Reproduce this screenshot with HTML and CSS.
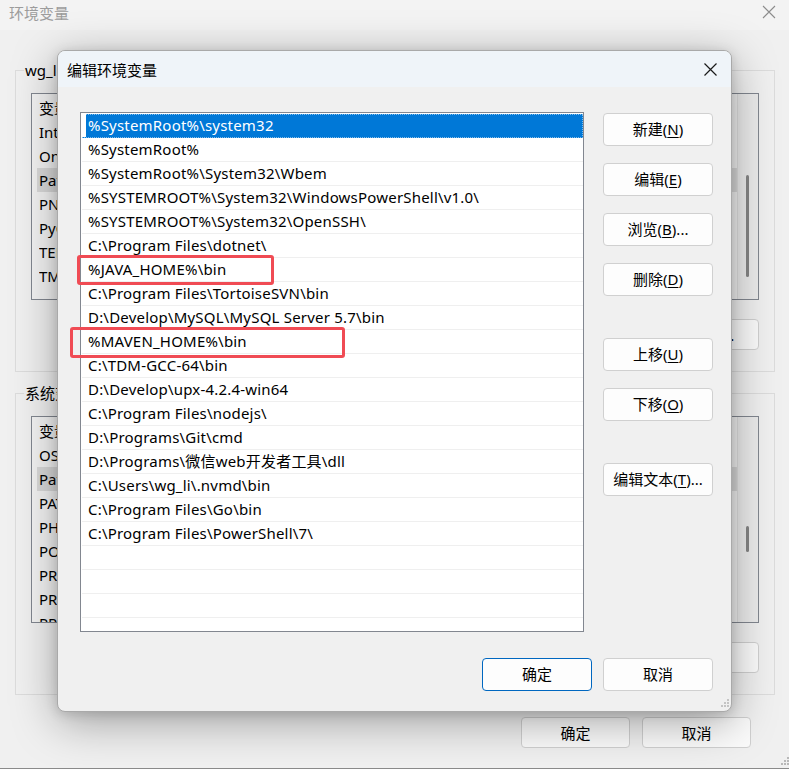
FILE: index.html
```html
<!DOCTYPE html>
<html lang="zh-CN">
<head>
<meta charset="utf-8">
<title>编辑环境变量</title>
<link rel="stylesheet" href="styles.css">
</head>
<body>
<div class="win">
  <div class="win-title">
    <span class="win-title-text">环境变量</span>
    <svg class="win-close" width="14" height="14" viewBox="0 0 14 14"><path d="M1 1L13 13M13 1L1 13" stroke="#8c8c8c" stroke-width="1.1" fill="none"/></svg>
  </div>
  <div class="win-body">
    <div class="group">
      <span class="group-label">wg_li 的用户变量(U)</span>
      <div class="bg-list">
        <div class="bg-head"><span class="cell">变量</span></div>
        <div class="bg-row"><span class="cell">IntelliJ IDEA</span></div>
        <div class="bg-row"><span class="cell">OneDrive</span></div>
        <div class="bg-row bg-sel"><span class="cell">Path</span></div>
        <div class="bg-row"><span class="cell">PNPM_HOME</span></div>
        <div class="bg-row"><span class="cell">PyCharm</span></div>
        <div class="bg-row"><span class="cell">TEMP</span></div>
        <div class="bg-row"><span class="cell">TMP</span></div>
        <div class="bg-scroll"><span class="bg-thumb thumb1"></span></div>
      </div>
      <div class="bg-btns"><button class="bg-btn">编辑(E)...</button></div>
    </div>
    <div class="group g2">
      <span class="group-label">系统变量(S)</span>
      <div class="bg-list">
        <div class="bg-head"><span class="cell">变量</span></div>
        <div class="bg-row"><span class="cell">OS</span></div>
        <div class="bg-row bg-sel"><span class="cell">Path</span></div>
        <div class="bg-row"><span class="cell">PATHEXT</span></div>
        <div class="bg-row"><span class="cell">PHP_HOME</span></div>
        <div class="bg-row"><span class="cell">POWERSHELL</span></div>
        <div class="bg-row"><span class="cell">PROCESSOR</span></div>
        <div class="bg-row"><span class="cell">PROCESSOR</span></div>
        <div class="bg-row"><span class="cell">PROCESSOR</span></div>
        <div class="bg-scroll"><span class="bg-thumb thumb2"></span></div>
      </div>
      <div class="bg-btns"><button class="bg-btn">删除(L)</button></div>
    </div>
  </div>
  <div class="win-footer">
    <button class="bg-btn">确定</button>
    <button class="bg-btn">取消</button>
  </div>
  <svg class="grip win-grip" width="10" height="10" viewBox="0 0 10 10"><g fill="#b8b8b8"><rect x="8" y="0" width="2" height="2"/><rect x="5" y="3" width="2" height="2"/><rect x="8" y="3" width="2" height="2"/><rect x="2" y="6" width="2" height="2"/><rect x="5" y="6" width="2" height="2"/><rect x="8" y="6" width="2" height="2"/></g></svg>
</div>

<div class="dlg">
  <div class="dlg-title">
    <span>编辑环境变量</span>
    <svg class="dlg-close" width="13" height="13" viewBox="0 0 13 13"><path d="M0.5 0.5L12.5 12.5M12.5 0.5L0.5 12.5" stroke="#1a1a1a" stroke-width="1.2" fill="none"/></svg>
  </div>
  <div class="dlg-body">
    <div class="list">
      <div class="row sel">%SystemRoot%\system32</div>
      <div class="row">%SystemRoot%</div>
      <div class="row">%SystemRoot%\System32\Wbem</div>
      <div class="row">%SYSTEMROOT%\System32\WindowsPowerShell\v1.0\</div>
      <div class="row">%SYSTEMROOT%\System32\OpenSSH\</div>
      <div class="row">C:\Program Files\dotnet\</div>
      <div class="row">%JAVA_HOME%\bin</div>
      <div class="row">C:\Program Files\TortoiseSVN\bin</div>
      <div class="row">D:\Develop\MySQL\MySQL Server 5.7\bin</div>
      <div class="row">%MAVEN_HOME%\bin</div>
      <div class="row">C:\TDM-GCC-64\bin</div>
      <div class="row">D:\Develop\upx-4.2.4-win64</div>
      <div class="row">C:\Program Files\nodejs\</div>
      <div class="row">D:\Programs\Git\cmd</div>
      <div class="row">D:\Programs\微信web开发者工具\dll</div>
      <div class="row">C:\Users\wg_li\.nvmd\bin</div>
      <div class="row">C:\Program Files\Go\bin</div>
      <div class="row">C:\Program Files\PowerShell\7\</div>
      <div class="row"></div>
      <div class="row"></div>
      <div class="row"></div>
      <div class="row"></div>
    </div>
    <div class="side">
      <button class="btn">新建(<u>N</u>)</button>
      <button class="btn">编辑(<u>E</u>)</button>
      <button class="btn">浏览(<u>B</u>)...</button>
      <button class="btn">删除(<u>D</u>)</button>
      <button class="btn gap">上移(<u>U</u>)</button>
      <button class="btn">下移(<u>O</u>)</button>
      <button class="btn gap">编辑文本(<u>T</u>)...</button>
    </div>
    <div class="foot">
      <button class="btn default">确定</button>
      <button class="btn">取消</button>
    </div>
  </div>
  <div class="mark mark-java"></div>
  <div class="mark mark-maven"></div>
  <svg class="grip dlg-grip" width="10" height="10" viewBox="0 0 10 10"><g fill="#c4c4c4"><rect x="8" y="0" width="2" height="2"/><rect x="5" y="3" width="2" height="2"/><rect x="8" y="3" width="2" height="2"/><rect x="2" y="6" width="2" height="2"/><rect x="5" y="6" width="2" height="2"/><rect x="8" y="6" width="2" height="2"/></g></svg>
</div>
</body>
</html>
```

FILE: styles.css
```css
* { box-sizing: border-box; }
html, body { margin: 0; padding: 0; }
body {
  width: 789px;
  height: 769px;
  overflow: hidden;
  background: #f0f0f0;
  font-family: "Noto Sans", "Noto Sans CJK SC", sans-serif;
  font-size: 15px;
  color: #000;
  position: relative;
}
button { font-family: inherit; font-size: 15px; color: #000; }

/* background window */
.win {
  width: 789px;
  height: 769px;
  background: #f0f0f0;
  border-bottom: 1px solid #8a8a8a;
  position: relative;
}
.win-title {
  height: 30px;
  background: #f3f3f3;
  display: flex;
  align-items: center;
  justify-content: space-between;
  padding: 0 13px 6px 9px;
}
.win-title-text { color: #9c9c9c; font-size: 15px; }
.win-body { padding: 40px 14px 0 15px; }
.group {
  position: relative;
  width: 760px;
  height: 302px;
  border: 1px solid #dcdcdc;
  padding: 22px 15px 0 15px;
}
.g2 { margin-top: 21px; }
.group-label {
  position: absolute;
  top: -11px;
  left: 8px;
  width: 34px;
  padding: 0 0 0 1px;
  background: #f0f0f0;
  line-height: 20px;
  white-space: nowrap;
  overflow: hidden;
}
.bg-list {
  position: relative;
  height: 207px;
  border: 1px solid #828790;
  background: #f4f4f4;
  padding-top: 2px;
  overflow: hidden;
}
.bg-head, .bg-row {
  height: 24px;
  line-height: 24px;
  padding-left: 7px;
  white-space: nowrap;
}
.cell {
  display: inline-block;
  width: 20px;
  overflow: hidden;
  vertical-align: top;
}
.bg-sel { background: #dadada; margin-left: 5px; padding-left: 2px; }
.bg-scroll {
  position: absolute;
  right: 0;
  top: 0;
  bottom: 0;
  width: 21px;
  background: #ececec;
  border-left: 1px solid #e2e2e2;
}
.bg-thumb {
  position: absolute;
  left: 8px;
  width: 3px;
  background: #858585;
  border-radius: 2px;
}
.thumb1 { top: 81px; height: 102px; }
.thumb2 { top: 109px; height: 26px; }
.bg-btns {
  display: flex;
  justify-content: flex-end;
  gap: 10px;
  margin-top: 19px;
}
.bg-btn {
  width: 109px;
  height: 31px;
  background: #fbfbfb;
  border: 1px solid #d0d0d0;
  border-radius: 4px;
  padding: 0;
}
.win-footer {
  display: flex;
  justify-content: flex-end;
  gap: 12px;
  padding: 22px 38px 0 0;
}
.grip { position: absolute; }
.win-grip { right: 0; bottom: 1px; }

/* dialog */
.dlg {
  position: absolute;
  left: 57px;
  top: 50px;
  width: 675px;
  height: 662px;
  background: #f0f0f0;
  border: 1px solid #a9a9a9;
  border-radius: 8px;
  box-shadow: 0 10px 45px rgba(0, 0, 0, 0.34), 0 2px 12px rgba(0, 0, 0, 0.14);
  overflow: hidden;
}
.dlg-title {
  height: 36px;
  background: #eff4f9;
  display: flex;
  align-items: center;
  justify-content: space-between;
  padding: 0 14px 0 9px;
  font-size: 15px;
}
.dlg-body {
  display: grid;
  grid-template-columns: 504px 110px;
  column-gap: 19px;
  padding: 25px 0 0 22px;
}
.list {
  height: 520px;
  border: 1px solid #828790;
  background: #fff;
  padding-top: 1px;
  overflow: hidden;
}
.row {
  height: 24px;
  line-height: 23px;
  border-bottom: 1px solid #efefef;
  margin-left: 1px;
  padding-left: 6px;
  white-space: nowrap;
  letter-spacing: 0.2px;
}
.row.sel {
  background: linear-gradient(to right, transparent 4px, #0078d7 4px);
  color: #fff;
  border-bottom-color: #0078d7;
  outline: 1px dotted rgba(255, 255, 255, 0.5);
  outline-offset: -1px;
}
.side {
  display: flex;
  flex-direction: column;
  gap: 17px;
  padding-top: 1px;
}
.btn {
  width: 110px;
  height: 33px;
  background: #fdfdfd;
  border: 1px solid #d0d0d0;
  border-radius: 4px;
  padding: 0;
  line-height: 31px;
}
.btn u { text-decoration-thickness: 1px; text-underline-offset: 2px; }
.btn.gap { margin-top: 25px; }
.btn.default { border-color: #0067c0; }
.foot {
  grid-column: 1 / 3;
  display: flex;
  justify-content: flex-end;
  gap: 11px;
  margin-top: 26px;
}
.mark {
  position: absolute;
  border: 3px solid #f04b54;
  border-radius: 3px;
}
.mark-java { left: 19px; top: 204px; width: 197px; height: 30px; }
.mark-maven { left: 12px; top: 276px; width: 275px; height: 31px; }
.dlg-grip { right: 2px; bottom: 2px; }
```
